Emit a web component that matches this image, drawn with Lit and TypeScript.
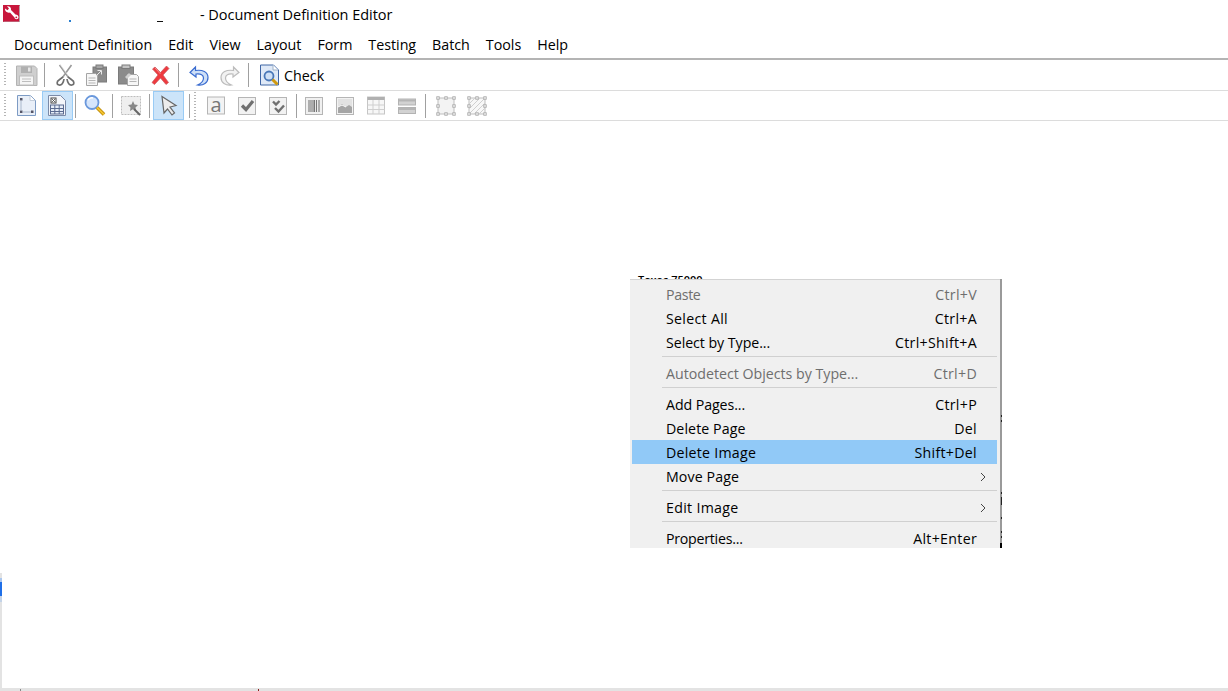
import { LitElement, html, css, svg } from "lit";
import { customElement } from "lit/decorators.js";

const handles = [[3,4],[11,4],[19,4],[3,12],[19,12],[3,20],[11,20],[19,20]].map(([x,y])=>svg`<rect x="${x-1.25}" y="${y-1.25}" width="2.5" height="2.5" fill="#ececec" stroke="#a8a8a8" stroke-width=".8"/>`);

const icons: Record<string, any> = {
  save: svg`<path d="M1.500 2h18l2.500 2.500V21.500H1.500z" fill="#cfcfcf" stroke="#b3b3b3"/><rect x="6" y="2.500" width="11" height="6.500" fill="#b0b0b0"/><rect x="13" y="3.500" width="2.500" height="4" fill="#e6e6e6"/><rect x="4.500" y="12" width="14" height="9" fill="#f5f5f5" stroke="#bdbdbd"/><path d="M7 15h9M7 17.500h9" stroke="#bdbdbd"/>`,
  cut: svg`<path d="M5.500 1l9 12.500M17.500 1l-9 12.500" stroke="#9a9a9a" stroke-width="1.600"/><path d="M6.500 1l8 11" stroke="#e5e5e5" stroke-width=".7"/><path d="M9 13l-4 3c-2.500 1.500-2.500 4.500 0 5 2.500.5 4.500-2 5-6M14 13l4 3c2.500 1.500 2.500 4.500 0 5-2.500.5-4.500-2-5-6" fill="none" stroke="#6e6e6e" stroke-width="1.700"/>`,
  copy: svg`<rect x="8" y="3" width="13.500" height="15" fill="#8b8b8b" stroke="#7b7b7b"/><rect x="11" y="1" width="7" height="3.500" fill="#a5a5a5" stroke="#7b7b7b"/><path d="M1.500 9.500h9l2 2v10h-11z" fill="#f6f6f6" stroke="#a5a5a5"/><path d="M3.500 14h7M3.500 16.500h7M3.500 19h7" stroke="#b5b5b5"/><path d="M11 12l5-5M12.500 6.500h4v4" stroke="#e8e8e8" fill="none"/>`,
  paste: svg`<rect x="1.500" y="3" width="15" height="17" fill="#8b8b8b" stroke="#7b7b7b"/><rect x="5" y="1" width="8" height="3.500" fill="#c4c4c4" stroke="#7b7b7b"/><path d="M10.500 10.500h9l2 2v9h-11z" fill="#f6f6f6" stroke="#a5a5a5"/><path d="M12.500 15h7M12.500 17.500h7" stroke="#b5b5b5"/><path d="M8 13l4-4 2 2-4 4z" fill="#d0d0d0"/>`,
  del: svg`<path d="M3.500 5l2.500-2 5.500 5.500L17.500 2l2.500 2.500-6 6.500 5.500 7.500-2.500 2-5.500-6.500-6 6.500-2.500-2 6-7.500z" fill="#ee3a3f" stroke="#c9585b" stroke-width=".7"/><path d="M6 4l5.500 6" stroke="#f79a9a" stroke-width=".8"/>`,
  undo: svg`<path d="M8.500 3L3 8.500 9 13V10c5-.5 7.500 1 7.500 4 0 3-2.500 5.500-6 7 6 1 10.500-2.500 10.500-7.500 0-5.500-5.500-8-12.500-7z" fill="#cfe0f7" stroke="#3a6cd0" stroke-width="1.200"/>`,
  redo: svg`<g transform="translate(23 0) scale(-1 1)"><path d="M8.500 3L3 8.500 9 13V10c5-.5 7.500 1 7.500 4 0 3-2.500 5.500-6 7 6 1 10.500-2.500 10.500-7.500 0-5.500-5.500-8-12.500-7z" fill="#f2f2f2" stroke="#bcbcbc" stroke-width="1.200"/></g>`,
  check: svg`<path d="M2.500 1h13l5 5v15h-18z" fill="#dfe9f7" stroke="#3f66a5"/><path d="M15 1v5h5" fill="#fff" stroke="#9fb2c8"/><circle cx="11" cy="12" r="4.500" fill="#cfe0f5" stroke="#4a78b8" stroke-width="1.800"/><path d="M14.500 15.500l5 5" stroke="#d09a10" stroke-width="3"/>`,
  page: svg`<path d="M2.500 1.500h13l5 5v15h-18z" fill="#e9eff8" stroke="#7d9bc4"/><path d="M15 1.500v5h5" fill="#fff" stroke="#c4cedb"/><rect x="5" y="4" width="2.500" height="2.500" fill="#556"/><rect x="5" y="16.500" width="2.500" height="2.500" fill="#556"/><rect x="16" y="16.500" width="2.500" height="2.500" fill="#556"/><path d="M6 6.500v10M7.500 18h8.500" stroke="#aab8cc"/>`,
  form: svg`<path d="M2.500 1.500h12l5 5v15h-17z" fill="#f4f6fa" stroke="#7b8aa8"/><rect x="5" y="4" width="5" height="5" fill="#fff" stroke="#444"/><path d="M6 5l3 3M9 5l-3 3" stroke="#444" stroke-width=".8"/><rect x="4.500" y="11" width="13" height="9" fill="#e6edf7" stroke="#5a6a90"/><path d="M4.500 14.500h13M4.500 17.500h13M8.800 11v9M13.200 11v9" stroke="#5a6a90"/>`,
  zoom: svg`<circle cx="9" cy="8.500" r="6.500" fill="#d5e5fb" stroke="#6a98dc" stroke-width="1.800"/><path d="M5 6c1-1.500 3-2.500 5-2" stroke="#fff" fill="none" stroke-width="1.500"/><path d="M14 13.500l7 7" stroke="#b98600" stroke-width="3.600"/><path d="M14 13.500l7 7" stroke="#f2c230" stroke-width="1.800"/>`,
  wand: svg`<rect x="1.500" y="2.500" width="19" height="18" fill="#efefef" stroke="#bdbdbd" stroke-dasharray="2 1"/><path d="M13 7l1.500 3.500 3.500.500-2.500 2.500.5 3.500-3-1.800-3 1.800.5-3.500L8 11l3.500-.500z" fill="#888"/><path d="M14 15l6 6" stroke="#666" stroke-width="2"/>`,
  arrow: svg`<path d="M5 2.500L19 11.500l-6 1.500 4.500 6-2.500 2-4.500-6-3.500 4z" fill="#ececec" stroke="#666" stroke-width="1.200"/>`,
  text: svg`<rect x="2.500" y="3" width="17" height="17" fill="#f3f3f3" stroke="#b5b5b5"/><text x="11" y="17.500" text-anchor="middle" font-family="Open Sans, sans-serif" font-size="20" fill="#777">a</text>`,
  chk: svg`<rect x="2.500" y="3.500" width="17" height="17" fill="#f2f2f2" stroke="#b5b5b5"/><path d="M6 11.500l4 4 7-8.500" fill="none" stroke="#707070" stroke-width="3.200"/>`,
  chk2: svg`<rect x="2.500" y="3.500" width="17" height="17" fill="#f2f2f2" stroke="#b5b5b5"/><path d="M6 7.500l3 3 3.500-3.500M8 14l3.500 3.500 5.500-6" fill="none" stroke="#707070" stroke-width="2.400"/>`,
  bar: svg`<rect x="2.500" y="3.500" width="17" height="17" fill="#f0f0f0" stroke="#b5b5b5"/><path d="M6 6v12M8 6v12M10 6v12M11.500 6v12M13.500 6v12M16 6v12" stroke="#777" stroke-width="1.100"/>`,
  img: svg`<rect x="2.500" y="3.500" width="17" height="17" fill="#f2f2f2" stroke="#b5b5b5"/><rect x="4" y="5" width="14" height="14" fill="#e2e2e2"/><path d="M4 19v-6l4-3 4 3 3-2 3 2v6z" fill="#a5a5a5"/><path d="M4 13l4-2 4 2" stroke="#fff" fill="none"/>`,
  tbl: svg`<rect x="2.500" y="3" width="17" height="17" fill="#f7f7f7" stroke="#c5c5c5"/><rect x="2.500" y="3" width="17" height="3" fill="#b0b0b0"/><path d="M8 6v14M14 6v14M2.500 11h17M2.500 15.500h17" stroke="#cfcfcf"/>`,
  lines: svg`<rect x="2.500" y="5" width="17" height="6" fill="#d2d2d2" stroke="#b3b3b3"/><rect x="2.500" y="13.500" width="17" height="6" fill="#d2d2d2" stroke="#b3b3b3"/><rect x="3" y="5.500" width="16" height="2" fill="#b5b5b5"/><rect x="3" y="14" width="16" height="2" fill="#b5b5b5"/>`,
  rect: svg`<rect x="3" y="4" width="16" height="16" fill="#f3f3f3" stroke="#bdbdbd"/>${handles}`,
  hatch: svg`<rect x="3" y="4" width="16" height="16" fill="#f8f8f8" stroke="#bdbdbd"/><path d="M3 10l6-6M3 15l11-11M3 20l16-16M8 20l11-11M13 20l6-6" stroke="#d0d0d0"/>${handles}`,
};

const menus = ["Document Definition", "Edit", "View", "Layout", "Form", "Testing", "Batch", "Tools", "Help"];
const edgeMarks = [[415, 2], [420, 2], [492, 2], [497, 8], [517, 2], [531, 2], [536, 2]];

type Row = { l: string; k?: string; off?: boolean; hot?: boolean; sub?: boolean; ls?: number } | "sep";
const rows: Row[] = [
  { l: "Paste", k: "Ctrl+V", off: true, ls: -0.35 },
  { l: "Select All", k: "Ctrl+A", ls: 0.3 },
  { l: "Select by Type...", k: "Ctrl+Shift+A", ls: -0.05 },
  "sep",
  { l: "Autodetect Objects by Type...", k: "Ctrl+D", off: true },
  "sep",
  { l: "Add Pages...", k: "Ctrl+P", ls: -0.08 },
  { l: "Delete Page", k: "Del", ls: 0.08 },
  { l: "Delete Image", k: "Shift+Del", hot: true, ls: 0.25 },
  { l: "Move Page", sub: true, ls: 0.1 },
  "sep",
  { l: "Edit Image", sub: true, ls: 0.3 },
  "sep",
  { l: "Properties...", k: "Alt+Enter", ls: -0.25 },
];

@customElement("app-root")
export class AppRoot extends LitElement {
  static styles = css`
    :host { display: flex; flex-direction: column; width: 1228px; height: 691px; overflow: hidden; background: #fff; font-family: "Open Sans", "Noto Sans", sans-serif; font-size: 14px; color: #000; }
    .title { height: 30px; display: flex; align-items: center; flex: none; }
    .logo { width: 17px; height: 17px; margin-left: 3px; margin-top: -3px; flex: none; }
    .title-mid { width: 179px; height: 100%; flex: none; position: relative; }
    .dot { position: absolute; left: 49px; top: 20px; width: 2px; height: 2px; background: #2a7fd0; }
    .dash { position: absolute; left: 137px; top: 21px; width: 6px; height: 1px; background: #111; }
    .title-text { font-size: 14.500px; letter-spacing: -.03px; margin: -1px 0 0 1px; white-space: nowrap; }
    .menubar { height: 28px; flex: none; display: flex; align-items: center; padding-left: 14px; gap: 16px; border-bottom: 2px solid #b4b4b4; white-space: nowrap; }
    .menubar span { font-size: 14.300px; letter-spacing: -.03px; }
    .bar { height: 30px; flex: none; display: flex; align-items: center; border-bottom: 1px solid #dcdcdc; box-sizing: border-box; }
    .bar.first { height: 31px; }
    .grip { width: 2px; height: 24px; margin-left: 4px; margin-right: 5px; background: repeating-linear-gradient(to bottom, #b5b5b5 0 1px, transparent 1px 3px); flex: none; }
    .btn { width: 31px; height: 29px; flex: none; display: flex; align-items: center; justify-content: center; box-sizing: border-box; }
    .btn svg { width: 23px; height: 23px; display: block; overflow: visible; }
    .btn.on { background: #cce4f9; border: 1px solid #99cbf5; }
    .btn.nudge { margin-left: 1px; }
    .sep { width: 1px; height: 24px; background: #a0a0a0; flex: none; margin: 0 3px 0 2px; }
    .sep.wide { margin-right: 5px; }
    .sep.mid { margin-right: 4px; }
    .sep.tight { margin-right: 2px; }
    .sep.more { margin-right: 5px; }
    .sep.r { margin: 0 2px 0 5px; }
    .gripin { width: 2px; height: 28px; margin: 0 5px 0 2px; background: repeating-linear-gradient(to bottom, #b5b5b5 0 1px, transparent 1px 3px); flex: none; }
    .check { display: flex; align-items: center; gap: 3px; padding-left: 4px; }
    .check svg { width: 23px; height: 23px; }
    .check span { font-size: 14.300px; }
    .canvas { flex: 1; position: relative; min-height: 0; }
    .left-edge { position: absolute; left: 0; top: 452px; width: 2px; bottom: 0; background: #e3e3e3; }
    .blue { position: absolute; left: 0; top: 457px; width: 2px; height: 24px; background: linear-gradient(to bottom, #a9c6ef 0 4px, #1f6fe8 4px 18px, #c3d3e8 18px); }
    .footer { height: 3px; flex: none; background: #e3e3e3; position: relative; }
    .fmark { position: absolute; top: 1px; width: 1px; height: 2px; }
    .peek { position: absolute; left: 638px; top: 153px; font-size: 11px; font-weight: 600; line-height: 12px; white-space: nowrap; }
    .menu { position: absolute; left: 630px; top: 158px; width: 370px; height: 269px; overflow: hidden; box-sizing: border-box; background: #f0f0f0; border-top: 1px solid #d3d3d3; padding-top: 2px; box-shadow: 2px 0 0 #9a9a9a; clip-path: inset(0 -3px 0 0); }
    .item { height: 24px; box-sizing: border-box; line-height: 16px; display: flex; align-items: center; justify-content: space-between; padding: 2px 20px 0 34px; margin: 0 3px 0 2px; white-space: nowrap; }
    .item span { font-size: 14.200px; letter-spacing: -.02px; }
    .item span.key { letter-spacing: .3px; }
    .item.off { color: #6e6e6e; }
    .item.hot { background: #91c9f7; }
    .item .chev { width: 6px; height: 10px; margin-right: -9px; }
    .rule { height: 1px; background: #d0d0d0; margin: 2px 3px 4px 32px; }
    .mark { position: absolute; left: 1001px; width: 1px; background: #222; }
    .mark-end { position: absolute; left: 1000px; top: 422px; width: 2px; height: 5px; background: #000; }
  `;

  private ic(n: string, on = false, nudge = false) {
    return html`<div class="btn ${on ? "on" : ""} ${nudge ? "nudge" : ""}"><svg viewBox="0 0 23 23">${icons[n]}</svg></div>`;
  }

  render() {
    return html`
      <div class="title">
        <svg class="logo" viewBox="0 0 17 17">
          <rect width="17" height="17" fill="#c8173c"/>
          <path d="M16.500 0.500V17H0.500" fill="none" stroke="#b9a2a8"/>
          <path d="M2 3.500c-.3 2.800 2.200 4.800 5 4l4.500 5c.2 2.300 4 2.300 4 0 .3-2-1.500-3-3-3L8 5C8.500 2.500 6.500.8 4 1.200L6 3.500 4.500 5.200z" fill="#fff"/>
          <circle cx="13.300" cy="12.300" r=".9" fill="#c8173c"/>
        </svg>
        <div class="title-mid"><i class="dot"></i><i class="dash"></i></div>
        <span class="title-text">- Document Definition Editor</span>
      </div>
      <div class="menubar">${menus.map((m) => html`<span>${m}</span>`)}</div>
      <div class="bar first">
        <i class="grip"></i>
        ${this.ic("save")}
        <i class="sep wide"></i>
        ${this.ic("cut")}${this.ic("copy")}${this.ic("paste", false, true)}${this.ic("del", false, true)}
        <i class="sep mid"></i>
        ${this.ic("undo")}${this.ic("redo", false, true)}
        <i class="sep more"></i>
        <div class="check"><svg viewBox="0 0 23 23">${icons.check}</svg><span>Check</span></div>
      </div>
      <div class="bar">
        <i class="grip"></i>
        ${this.ic("page")}${this.ic("form", true)}
        <i class="sep"></i>
        ${this.ic("zoom")}
        <i class="sep"></i>
        ${this.ic("wand")}
        <i class="sep"></i>
        ${this.ic("arrow", true)}
        <i class="sep r"></i><i class="gripin"></i>
        ${this.ic("text")}${this.ic("chk")}${this.ic("chk2")}
        <i class="sep tight"></i>
        ${this.ic("bar")}${this.ic("img")}${this.ic("tbl")}${this.ic("lines")}
        <i class="sep more"></i>
        ${this.ic("rect")}${this.ic("hatch")}
      </div>
      <div class="canvas">
        <div class="peek">Texas 75000</div>
        <div class="left-edge"></div>
        <div class="blue"></div>
        <div class="menu">
          ${rows.map((r) =>
            r === "sep"
              ? html`<div class="rule"></div>`
              : html`<div class="item ${r.off ? "off" : ""} ${r.hot ? "hot" : ""}">
                  <span style="letter-spacing:${r.ls ?? 0}px">${r.l}</span>
                  ${r.sub
                    ? html`<svg class="chev" viewBox="0 0 6 10"><path d="M1 1l4 4-4 4" fill="none" stroke="#444" stroke-width="1"/></svg>`
                    : html`<span class="key">${r.k}</span>`}
                </div>`
          )}
        </div>
        ${edgeMarks.map(([y, h]) => html`<i class="mark" style="top:${y - 121}px;height:${h}px"></i>`)}
        <div class="mark-end"></div>
      </div>
      <div class="footer">
        <i class="fmark" style="left:20px;background:#888"></i>
        <i class="fmark" style="left:258px;background:#8b1a1a"></i>
      </div>
    `;
  }
}
